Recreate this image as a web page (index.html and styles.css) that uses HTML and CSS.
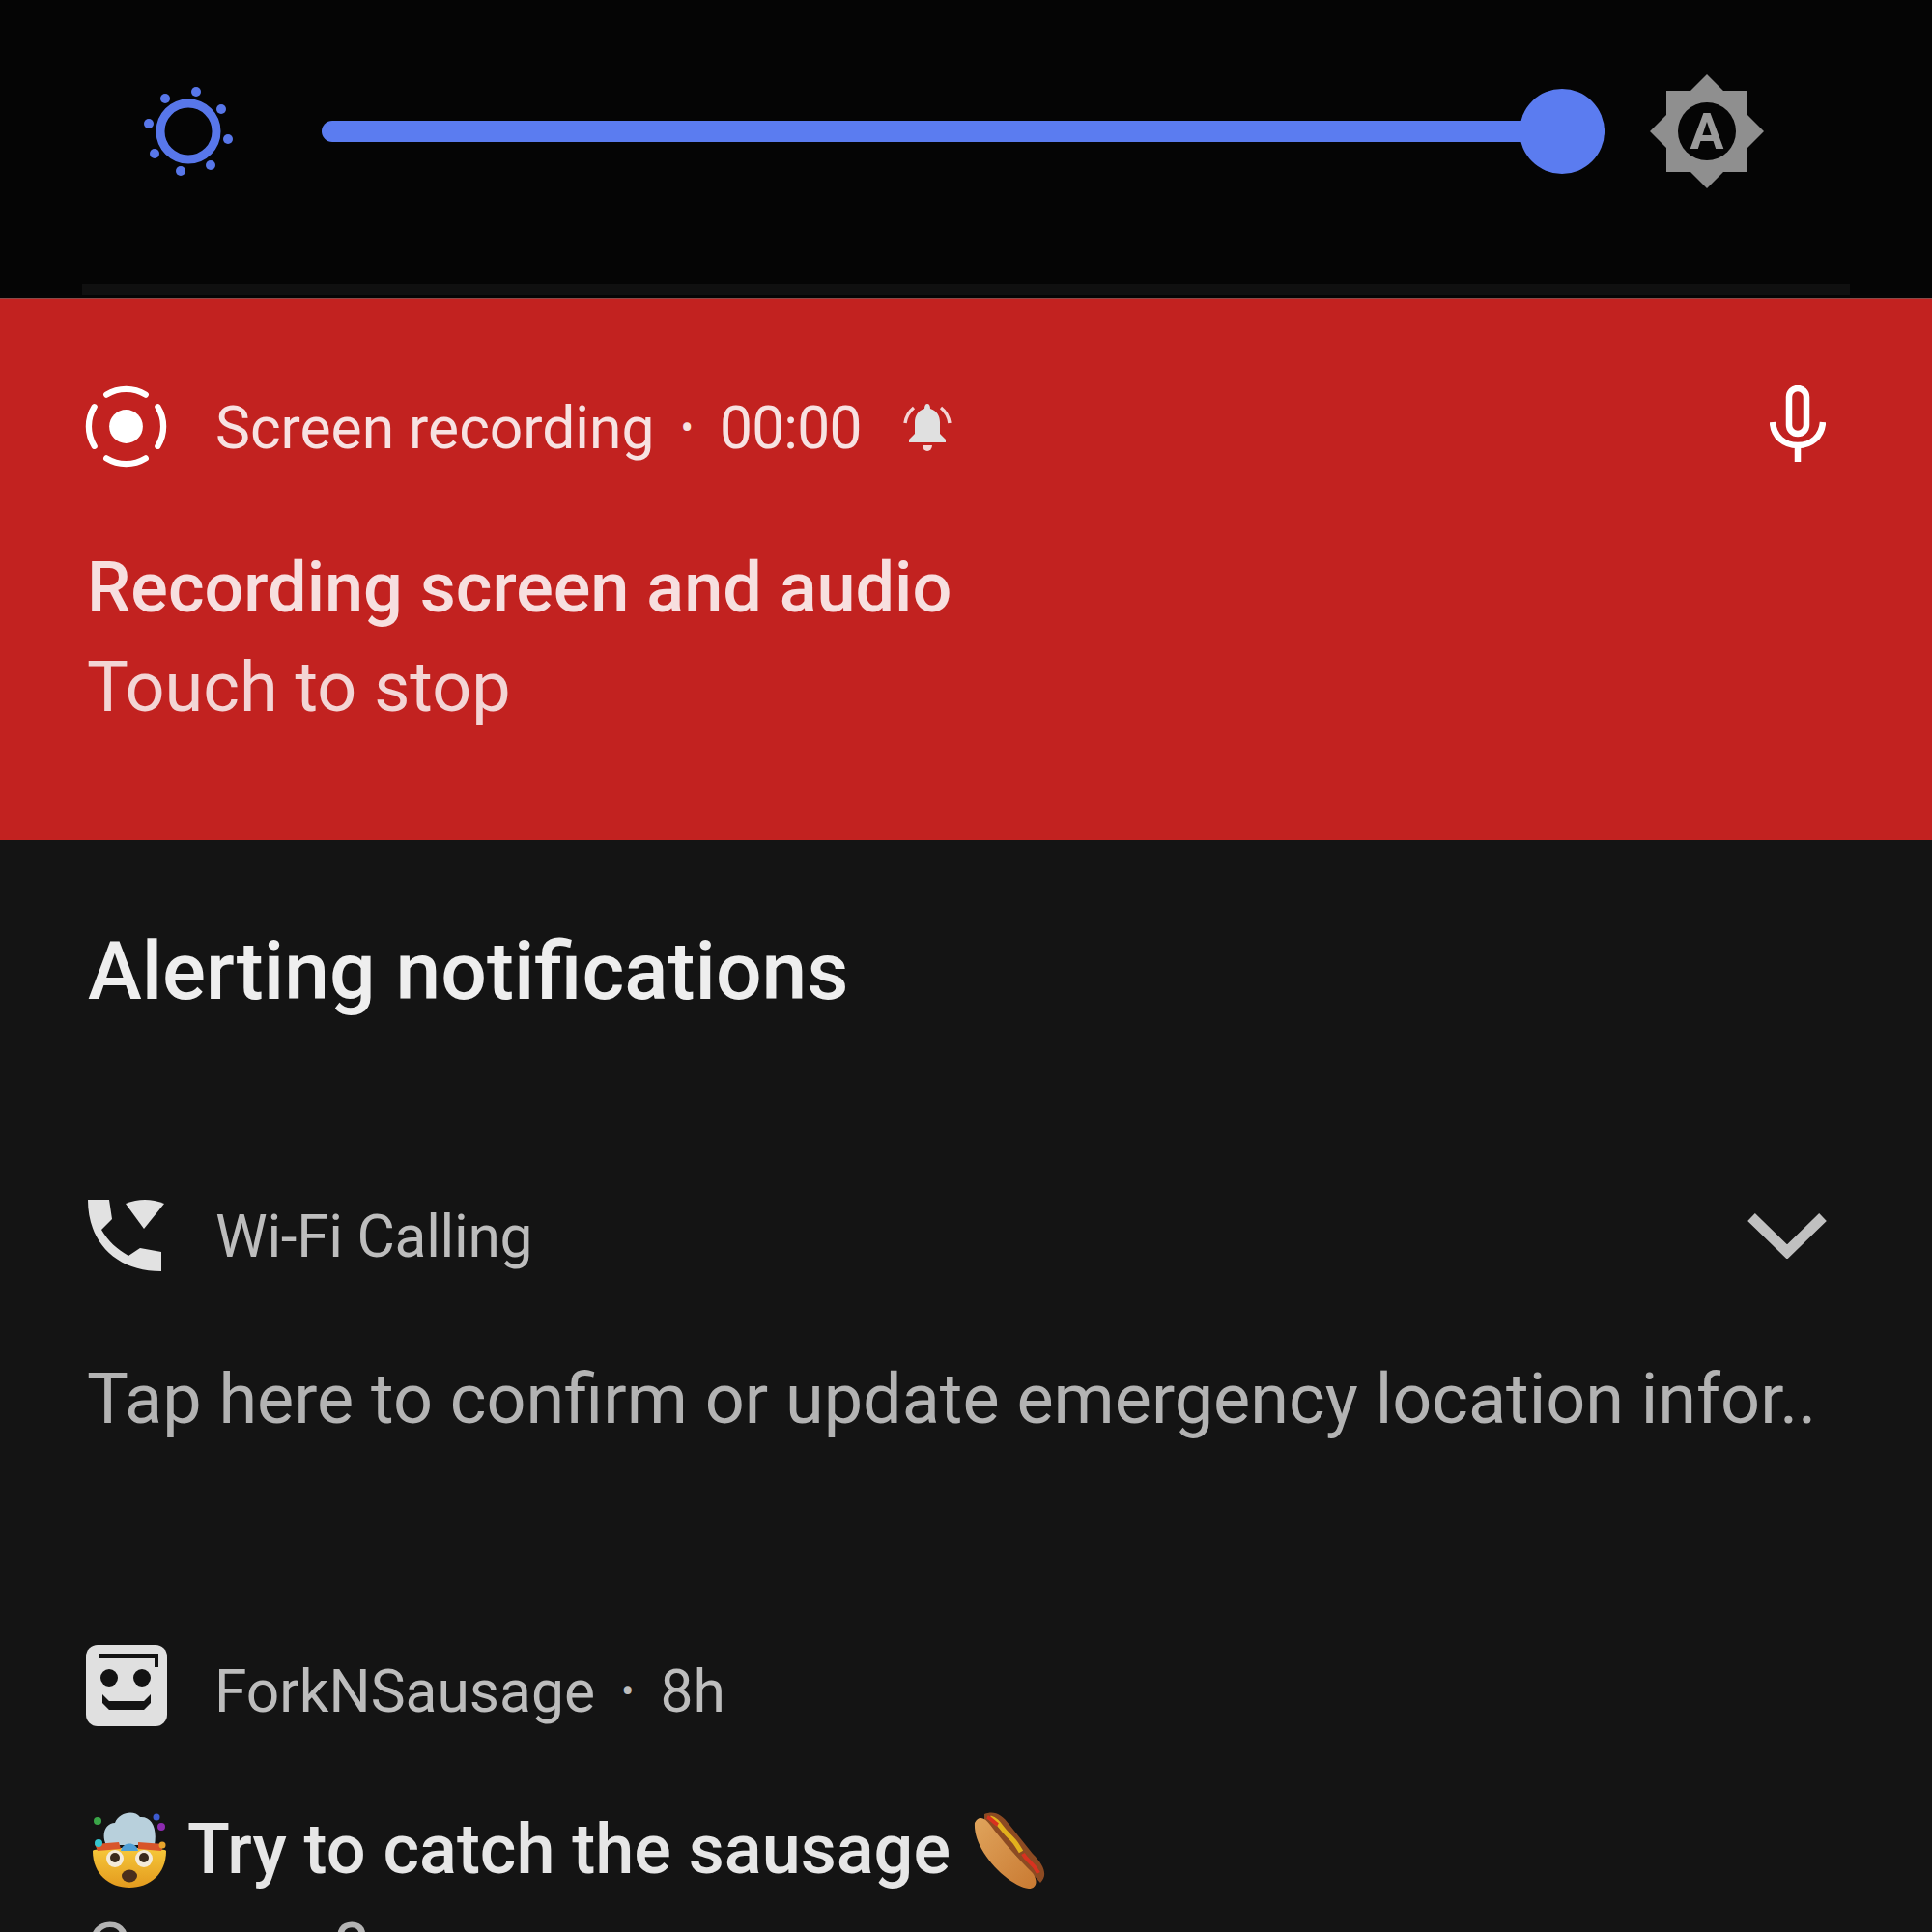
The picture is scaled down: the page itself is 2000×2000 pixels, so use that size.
FILE: index.html
```html
<!DOCTYPE html>
<html lang="en">
<head>
<meta charset="utf-8">
<title>Notification shade</title>
<link rel="stylesheet" href="styles.css">
</head>
<body>
<div class="shade">
  <section class="brightness">
    <div class="slider-row">
      <svg class="sun" viewBox="-50 -50 100 100" aria-hidden="true">
        <circle r="29" fill="none" stroke="#5877ea" stroke-width="9"/>
        <g fill="#5877ea">
          <circle cx="8" cy="-41" r="5"/><circle cx="-24" cy="-34" r="5"/><circle cx="34" cy="-23" r="5"/><circle cx="-41" cy="-8" r="5"/>
          <circle cx="41" cy="8" r="5"/><circle cx="-35" cy="23" r="5"/><circle cx="23" cy="35" r="5"/><circle cx="-8" cy="41" r="5"/>
        </g>
      </svg>
      <div class="track"><div class="thumb"></div></div>
      <svg class="auto" viewBox="-60 -60 120 120" aria-hidden="true">
        <path fill="#8f8f8f" d="M0-59 17-42H42V-17L59 0 42 17V42H17L0 59-17 42H-42V17L-59 0-42-17V-42H-17Z"/>
        <circle r="30" fill="#050505"/>
        <text class="auto-a" x="0" y="18" text-anchor="middle">A</text>
      </svg>
    </div>
    <div class="rule"></div>
  </section>

  <section class="recording">
    <div class="head">
      <svg class="rec-icon" viewBox="-44 -44 88 88" aria-hidden="true">
        <circle r="18" fill="#fff"/>
        <g fill="none" stroke="#fff" stroke-width="6.5" stroke-linecap="round">
          <path d="M-21-34A40 40 0 0 1 21-34"/><path d="M34-21A40 40 0 0 1 34 21"/>
          <path d="M21 34A40 40 0 0 1-21 34"/><path d="M-34 21A40 40 0 0 1-34-21"/>
        </g>
      </svg>
      <span class="head-text">Screen recording</span>
      <span class="dot">•</span>
      <span class="head-text time">00:00</span>
      <svg class="bell" viewBox="0 0 50 50" aria-hidden="true">
        <path fill="#e0e0e0" d="M25 0c2 0 3 2 3 5 7 2 10 8 10 14v12l6 6v3H6v-3l6-6V19c0-6 3-12 10-14 0-3 1-5 3-5Z"/>
        <path fill="#f3d5d5" d="M20 43h10a5 6 0 0 1-10 0Z"/>
        <path fill="none" stroke="#f3d5d5" stroke-width="3.5" d="M2 20C3 13 6 8 11 4M48 20C47 13 44 8 39 4"/>
      </svg>
      <svg class="mic" viewBox="0 0 58 80" aria-hidden="true">
        <rect x="20" y="3" width="18" height="47" rx="9" fill="none" stroke="#fff" stroke-width="6.5"/>
        <path d="M3 38C4 53 15 62 29 62S54 53 55 38M29 62V79" fill="none" stroke="#fff" stroke-width="6.5"/>
      </svg>
    </div>
    <div class="rec-title">Recording screen and audio</div>
    <div class="rec-sub">Touch to stop</div>
  </section>

  <section class="list">
    <h2 class="list-title">Alerting notifications</h2>

    <article class="note note-wifi">
      <div class="head">
        <svg class="phone" viewBox="0 0 80 76" aria-hidden="true">
          <path fill="#e2e2e2" d="M1 1H23L26 21 15 32C22 44 31 52 43 59L55 51 77 55V75C30 75 1 45 1 1Z"/>
          <path fill="#e2e2e2" d="M40 5Q60-3 80 5L59 31Z"/>
        </svg>
        <span class="head-text muted wifi-text">Wi-Fi Calling</span>
        <svg class="chevron" viewBox="0 0 84 48" aria-hidden="true">
          <path d="M5 5 42 41 79 5" fill="none" stroke="#c0c0c0" stroke-width="11"/>
        </svg>
      </div>
      <div class="note-body">Tap here to confirm or update emergency location infor..</div>
    </article>
    <div class="divider"></div>

    <article class="note note-fork">
      <div class="head">
        <svg class="fork" viewBox="0 0 84 84" aria-hidden="true">
          <rect width="84" height="84" rx="12" fill="#e0e0e0"/>
          <path d="M14 11H73V23" fill="none" stroke="#131313" stroke-width="4"/>
          <circle cx="24" cy="34" r="9" fill="#131313"/><circle cx="58" cy="34" r="9" fill="#131313"/>
          <path d="M17 51 24 58H60L67 51V60L60 67H24L17 60Z" fill="#131313"/>
        </svg>
        <span class="head-text muted">ForkNSausage</span>
        <span class="dot muted">•</span>
        <span class="head-text muted">8h</span>
      </div>
      <div class="note-title">
        <svg class="emoji-head" viewBox="0 0 78 78" aria-hidden="true">
          <defs>
            <linearGradient id="face" x1="0" y1="0" x2="0" y2="1"><stop offset="0" stop-color="#f6c83a"/><stop offset="1" stop-color="#e39a1e"/></linearGradient>
          </defs>
          <path fill="url(#face)" d="M1 40C1 36 77 36 77 40 77 64 60 78 39 78S1 64 1 40Z"/>
          <path fill="#b8d0dc" d="M15 34C9 22 15 11 24 11 28 0 44-3 50 5 62 4 68 16 65 34Z"/>
          <path fill="#4f9fd6" d="M30 40C32 30 46 30 48 40Z"/>
          <path fill="#d8552a" d="M3 33 28 31 30 38 6 40ZM75 33 48 31 48 38 72 40Z"/>
          <circle cx="24" cy="48" r="9" fill="#f3ead8"/><circle cx="54" cy="48" r="9" fill="#f3ead8"/>
          <circle cx="24" cy="47" r="5" fill="#3a2a1c"/><circle cx="54" cy="47" r="5" fill="#3a2a1c"/>
          <ellipse cx="39" cy="66" rx="8" ry="6.5" fill="#4a2e1c"/>
          <circle cx="6" cy="9" r="4" fill="#3aa548"/><circle cx="67" cy="5" r="3.5" fill="#3d5bd0"/>
          <circle cx="72" cy="15" r="4" fill="#8d2bb0"/><circle cx="7" cy="32" r="4" fill="#35c6d0"/>
          <circle cx="73" cy="34" r="3.5" fill="#e8a52c"/>
        </svg><span class="title-text">Try to catch the sausage</span><svg class="emoji-dog" viewBox="0 0 76 80" aria-hidden="true">
          <defs>
            <linearGradient id="bun" x1="0" y1="0" x2="1" y2="1"><stop offset="0" stop-color="#e0a45c"/><stop offset="1" stop-color="#c97a32"/></linearGradient>
          </defs>
          <path fill="#8c4a22" d="M12 3C22-1 30 3 38 14L62 44C74 56 78 66 70 74L12 10Z"/>
          <path fill="none" stroke="#e2b11d" stroke-width="5" d="M18 7C26 9 28 16 36 24S44 32 50 42"/>
          <path fill="none" stroke="#d8321f" stroke-width="4" d="M52 44C56 52 62 52 68 64"/>
          <path fill="none" stroke="#d8321f" stroke-width="4" d="M15 6C20 8 22 12 26 14"/>
          <path fill="url(#bun)" d="M2 12C6 4 12 6 18 14 30 30 48 50 62 64 68 72 66 80 58 80 38 78 0 42 2 12Z"/>
        </svg>
      </div>
      <div class="note-body-small">Can you?</div>
    </article>
  </section>
</div>
</body>
</html>
```

FILE: styles.css
```css
* { box-sizing: border-box; }
html, body { margin: 0; padding: 0; background: #141414; }
body { width: 2000px; height: 2000px; overflow: hidden; font-family: Roboto, "Noto Sans", sans-serif; }
.shade { display: flex; flex-direction: column; height: 2000px; }

.brightness { height: 309px; background: #050505; padding-top: 92px; display: flex; flex-direction: column; }
.slider-row { display: flex; align-items: center; height: 88px; padding-left: 145px; }
.sun { width: 100px; height: 100px; flex: none; }
.track { width: 1328px; height: 22px; margin-left: 88px; background: #5b7cf0; border-radius: 11px; display: flex; align-items: center; justify-content: flex-end; flex: none; }
.thumb { width: 88px; height: 88px; border-radius: 50%; background: #5b7cf0; flex: none; }
.auto { width: 120px; height: 120px; margin-left: 46px; flex: none; }
.auto-a { font: 700 52px Roboto, sans-serif; fill: #9a9a9a; }
.rule { height: 11px; margin: 114px 85px 0; background: #101010; }

.recording { height: 561px; background: #c22220; border-top: 1px solid #8a4a48; padding: 87px 0 0 88px; color: #f7e2e2; }
.head { display: flex; align-items: center; height: 88px; }
.head-text { font-size: 60.5px; line-height: 88px; white-space: nowrap; padding-top: 6px; }
.time { letter-spacing: -0.8px; }
.dot { font-size: 40px; margin: 0 27px; line-height: 88px; padding-top: 6px; }
.rec-icon { width: 85px; height: 85px; margin-right: 50px; flex: none; }
.bell { width: 50px; height: 50px; margin-left: 43px; margin-top: 4px; flex: none; }
.mic { width: 58px; height: 80px; margin-left: auto; margin-right: 110px; margin-top: -4px; flex: none; }
.rec-title { margin-top: 84px; font-size: 72px; font-weight: 500; line-height: 80px; color: #f7dfdf; padding-left: 2px; }
.rec-sub { margin-top: 23px; font-size: 72px; line-height: 80px; color: #f3d5d5; padding-left: 2px; }

.list { flex: 1; background: #141414; display: flex; flex-direction: column; padding-left: 90px; overflow: hidden; }
.list-title { margin: 91px 0 0; font-size: 84px; font-weight: 500; line-height: 90px; color: #eeeeee; padding-left: 1px; }
.note { display: flex; flex-direction: column; }
.note-wifi { margin-top: 184px; }
.phone { width: 80px; height: 76px; margin-right: 53px; flex: none; }
.muted { color: #bdbdbd; }
.wifi-text { letter-spacing: -0.3px; padding-top: 4px; }
.chevron { width: 84px; height: 48px; margin-left: auto; margin-right: 108px; flex: none; }
.note-body { margin-top: 86px; font-size: 72px; line-height: 80px; color: #b3b3b3; white-space: nowrap; }
.divider { height: 2px; margin: 105px 0 0 -67px; background: #101010; }
.note-fork { margin-top: 111px; margin-left: -1px; }
.fork { width: 84px; height: 84px; margin-right: 49px; margin-top: -8px; flex: none; }
.note-title { display: flex; align-items: center; margin-top: 82px; height: 80px; color: #e6e6e6; margin-left: 6px; }
.emoji-head { width: 78px; height: 78px; flex: none; }
.title-text { font-size: 72px; font-weight: 500; line-height: 80px; margin-left: 21px; white-space: nowrap; }
.emoji-dog { width: 76px; height: 80px; margin-left: 23px; flex: none; }
.note-body-small { margin-top: 23px; font-size: 72px; line-height: 80px; color: #b3b3b3; }
```
